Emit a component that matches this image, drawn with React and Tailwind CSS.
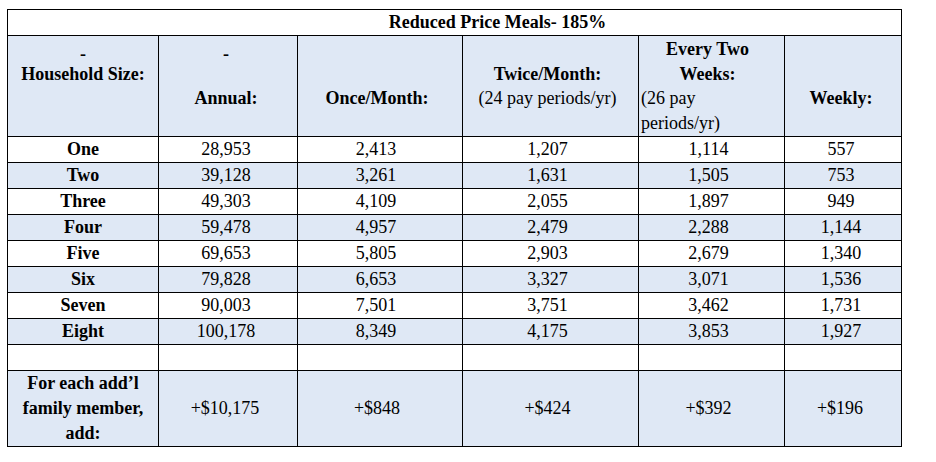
const ROWS = [
  ['One', '28,953', '2,413', '1,207', '1,114', '557'],
  ['Two', '39,128', '3,261', '1,631', '1,505', '753'],
  ['Three', '49,303', '4,109', '2,055', '1,897', '949'],
  ['Four', '59,478', '4,957', '2,479', '2,288', '1,144'],
  ['Five', '69,653', '5,805', '2,903', '2,679', '1,340'],
  ['Six', '79,828', '6,653', '3,327', '3,071', '1,536'],
  ['Seven', '90,003', '7,501', '3,751', '3,462', '1,731'],
  ['Eight', '100,178', '8,349', '4,175', '3,853', '1,927'],
]

const EXTRA = ['+$10,175', '+$848', '+$424', '+$392', '+$196']

const cell = 'border border-black p-0 leading-[25px] text-center align-middle'
const blue = 'bg-[#dfe8f5]'
const hcell = 'border border-black px-0 pt-[1px] pb-[1px] leading-[24.5px] align-top text-center'

function Line({ children, className = '' }) {
  return <div className={`h-[24.5px] ${className}`}>{children}</div>
}

function Dash() {
  return <div className="h-[24.5px] pt-[7px] leading-[20px] font-bold">-</div>
}

export default function App() {
  return (
    <div className="min-h-[462px] w-[936px] bg-white pt-[9px] pl-[7px] [font-family:'Liberation_Serif',serif] text-[18px] text-black">
      <table className="w-[894px] table-fixed border-collapse">
        <colgroup>
          <col className="w-[151px]" />
          <col className="w-[139px]" />
          <col className="w-[165px]" />
          <col className="w-[176px]" />
          <col className="w-[146px]" />
          <col className="w-[117px]" />
        </colgroup>
        <tbody>
          <tr>
            <td colSpan={6} className={`${cell} pl-[86px] font-bold`}>
              Reduced Price Meals- 185%
            </td>
          </tr>

          {/* header */}
          <tr className={blue}>
            <td className={`${hcell} font-bold`}>
              <Dash />
              <Line>Household Size:</Line>
            </td>
            <td className={`${hcell} font-bold pr-[4px]`}>
              <Dash />
              <Line />
              <Line>Annual:</Line>
            </td>
            <td className={`${hcell} font-bold pr-[6px]`}>
              <Line />
              <Line />
              <Line>Once/Month:</Line>
            </td>
            <td className={`${hcell} pr-[6px]`}>
              <Line />
              <Line className="font-bold">Twice/Month:</Line>
              <Line>(24 pay periods/yr)</Line>
            </td>
            <td className={`${hcell} pl-[2px] pr-[10px]`}>
              <div className="font-bold">Every Two Weeks:</div>
              <div className="text-left">(26 pay periods/yr)</div>
            </td>
            <td className={`${hcell} font-bold pr-[4px]`}>
              <Line />
              <Line />
              <Line>Weekly:</Line>
            </td>
          </tr>

          {ROWS.map((r, i) => (
            <tr key={r[0]} className={i % 2 === 1 ? blue : 'bg-white'}>
              <td className={`${cell} font-bold`}>{r[0]}</td>
              <td className={`${cell} pr-[4px]`}>{r[1]}</td>
              <td className={`${cell} pr-[8px]`}>{r[2]}</td>
              <td className={`${cell} pr-[6px]`}>{r[3]}</td>
              <td className={`${cell} pr-[6px]`}>{r[4]}</td>
              <td className={`${cell} pr-[4px]`}>{r[5]}</td>
            </tr>
          ))}

          <tr className="bg-white">
            {[0, 1, 2, 3, 4, 5].map(k => (
              <td key={k} className={cell}>&nbsp;</td>
            ))}
          </tr>

          <tr className={blue}>
            <td className={`${cell} font-bold`}>
              For each add’l
              <br />
              family member,
              <br />
              add:
            </td>
            {EXTRA.map(v => (
              <td key={v} className={`${cell} pr-[6px]`}>{v}</td>
            ))}
          </tr>
        </tbody>
      </table>
    </div>
  )
}
